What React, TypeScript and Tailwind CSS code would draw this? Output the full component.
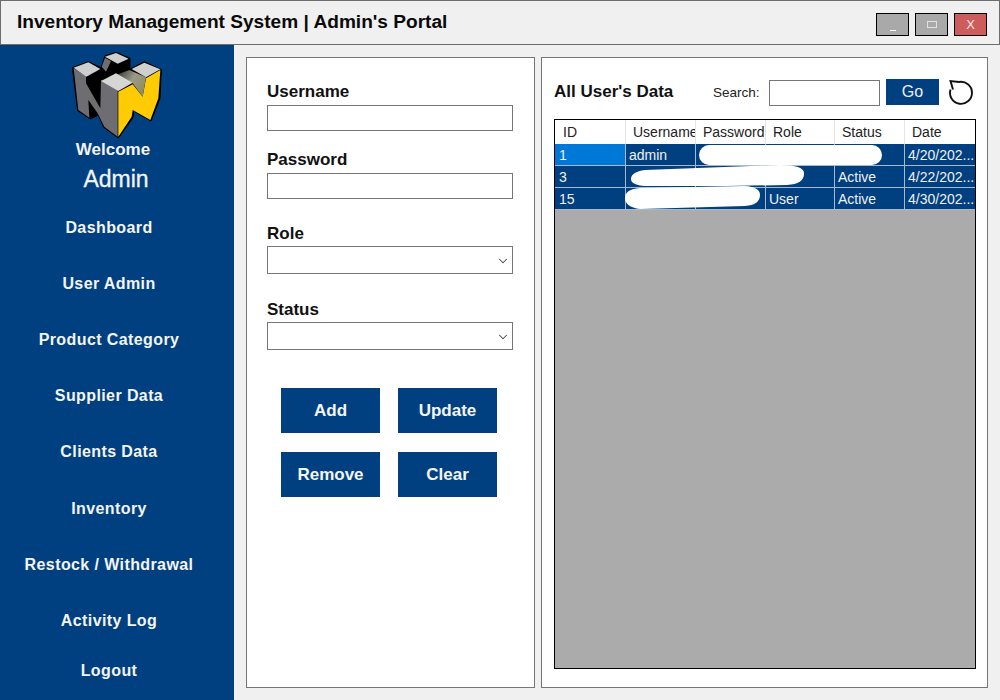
import { ChevronDown } from "lucide-react";

const navItems = [
  { label: "Dashboard", height: "h-[56px]" },
  { label: "User Admin", height: "h-[56px]" },
  { label: "Product Category", height: "h-[56px]" },
  { label: "Supplier Data", height: "h-[56px]" },
  { label: "Clients Data", height: "h-[56px]" },
  { label: "Inventory", height: "h-[57px]" },
  { label: "Restock / Withdrawal", height: "h-[56px]" },
  { label: "Activity Log", height: "h-[56px]" },
  { label: "Logout", height: "h-[44px]" },
];

const rows = [
  { id: "1", username: "admin", role: "", status: "", date: "4/20/202..." },
  { id: "3", username: "", role: "", status: "Active", date: "4/22/202..." },
  { id: "15", username: "", role: "User", status: "Active", date: "4/30/202..." },
];

const N64Logo = () => (
  <svg viewBox="0 0 330 300" className="h-[100px] w-[110px] shrink-0">
    <defs>
      <linearGradient id="olive" x1="0" y1="0" x2="1" y2="0.6">
        <stop offset="0" stopColor="#2a2a2a" />
        <stop offset="0.55" stopColor="#9a9a88" />
        <stop offset="1" stopColor="#8f8f60" />
      </linearGradient>
    </defs>
    <polygon
      points="34,68 82,50 120,68 132,32 165,22 207,40 207,72 250,50 301,74 297,160 270,228 218,198 216,218 172,279 128,247 112,210 88,222 50,197"
      fill="#000"
      stroke="#000"
      strokeWidth="3"
      strokeLinejoin="round"
    />
    <polygon points="38,70 75,93 75,115 118,190 120,105 170,133 170,275 130,245 110,205 82,165 85,218 52,195" fill="#6e6e72" />
    <polygon points="132,38 150,48 135,80 122,65" fill="#6e6e72" />
    <polygon points="172,140 215,118 245,155 255,100 298,75 292,160 268,225 215,195 212,215 172,275" fill="#ffcb05" />
    <polygon points="205,75 255,97 245,155 215,115 165,90" fill="url(#olive)" />
    <polygon points="38,68 82,52 118,72 76,95" fill="#cfcfcf" />
    <polygon points="132,35 165,24 203,41 170,56" fill="#cfcfcf" />
    <polygon points="212,72 250,53 298,73 255,97" fill="#cfcfcf" />
    <polygon points="120,108 165,85 215,113 172,138" fill="#d6d6d6" />
  </svg>
);

const Field = ({ label, className }: { label: string; className: string }) => (
  <label className={`flex w-[246px] flex-col ${className}`}>
    <span className="text-[17px] leading-[20px] font-bold text-[#111]">{label}</span>
    <input className="mt-[3px] h-[26px] w-[246px] border border-[#767676] bg-white" />
  </label>
);

const SelectField = ({ label, className }: { label: string; className: string }) => (
  <label className={`relative flex w-[246px] flex-col ${className}`}>
    <span className="text-[17px] leading-[20px] font-bold text-[#111]">{label}</span>
    <select className="mt-[2px] h-[28px] w-[246px] appearance-none border border-[#767676] bg-white" />
    <ChevronDown size={14} strokeWidth={1.75} className="absolute right-[3px] bottom-[6px] text-[#444]" />
  </label>
);

const ActionButton = ({ label }: { label: string }) => (
  <button className="h-[45px] w-[99px] bg-[#004080] text-[17px] font-bold text-[#f4f4f4]">{label}</button>
);

const App = () => {
  const headerCell = "border-r border-[#e4e4e4] text-left text-[14px] font-normal text-[#222]";
  const dataCell =
    "border-r border-b border-[#a9b9cc] pt-[1px] text-[14px] leading-[20px] font-normal whitespace-nowrap text-[#f0f0f0]";

  return (
    <div className="flex h-[700px] w-[1000px] flex-col overflow-hidden bg-[#f0f0f0] font-['Liberation_Sans',Arial,sans-serif]">
      <header className="flex h-[45px] shrink-0 items-center justify-between border border-[#6d6d6d] bg-[#f0f0f0] pr-[12px] pl-[16px]">
        <h1 className="pb-[1px] text-[19.1px] font-bold text-[#0a0a0a]">Inventory Management System | Admin's Portal</h1>
        <div className="mt-[4px] flex gap-[6px]">
          <button className="flex h-[23px] w-[33px] items-end justify-center border border-black bg-[#a9a9a9] pb-[4px]">
            <span className="h-[1px] w-[6px] bg-white" />
          </button>
          <button className="flex h-[23px] w-[33px] items-center justify-center border border-black bg-[#a9a9a9]">
            <span className="h-[7px] w-[10px] border border-[#e2e2e2]" />
          </button>
          <button className="flex h-[23px] w-[33px] items-center justify-center border border-black bg-[#cd5c5c] text-[13px] text-[#f6e6e6]">
            X
          </button>
        </div>
      </header>

      <div className="flex min-h-0 flex-1">
        <aside className="flex w-[234px] shrink-0 flex-col bg-[#004080] text-[#f4f4f4]">
          <div className="ml-[61px]">
            <N64Logo />
          </div>
          <div className="mt-[-5px] h-[20px] w-[226px] text-center text-[17px] leading-[20px] font-bold">Welcome</div>
          <div className="mt-[6px] h-[34px] w-[232px] text-center text-[23px] leading-[26px] [-webkit-text-stroke:0.3px_#f4f4f4]">
            Admin
          </div>
          <nav className="flex flex-col">
            {navItems.map((item) => (
              <button
                key={item.label}
                className={`${item.height} w-[218px] text-center text-[16px] font-bold tracking-[0.4px]`}
              >
                {item.label}
              </button>
            ))}
          </nav>
        </aside>

        <main className="flex min-w-0 flex-1 gap-[6px] pt-[12px] pl-[12px]">
          <section className="flex h-[631px] w-[289px] flex-col border border-[#767676] bg-white pl-[20px]">
            <Field label="Username" className="mt-[24px]" />
            <Field label="Password" className="mt-[19px]" />
            <SelectField label="Role" className="mt-[25px]" />
            <SelectField label="Status" className="mt-[26px]" />
            <div className="mt-[38px] ml-[14px] grid w-[216px] grid-cols-[99px_99px] gap-x-[18px] gap-y-[19px]">
              <ActionButton label="Add" />
              <ActionButton label="Update" />
              <ActionButton label="Remove" />
              <ActionButton label="Clear" />
            </div>
          </section>

          <section className="flex h-[631px] w-[447px] flex-col border border-[#767676] bg-white pl-[12px]">
            <div className="mt-[21px] flex h-[28px] items-center">
              <h2 className="mb-[2px] w-[159px] text-[17px] font-bold text-[#111]">All User's Data</h2>
              <span className="w-[56px] text-[13.5px] text-[#222]">Search:</span>
              <input className="h-[26px] w-[111px] border border-[#767676] bg-white" />
              <button className="mb-[2px] ml-[6px] h-[26px] w-[53px] bg-[#004080] text-[16px] text-[#f0f0f0]">Go</button>
              <svg viewBox="0 0 28 28" className="ml-[8px] h-[28px] w-[28px] shrink-0" fill="none" stroke="#111" strokeWidth="1.9">
                <path d="M 12 3 A 11 11 0 1 1 3.5 10.5" />
                <path d="M 12 3 L 3.5 2 L 6 10.5" />
              </svg>
            </div>

            <div className="relative mt-[12px] h-[550px] w-[422px] border border-black bg-[#ababab]">
              <table className="w-full table-fixed border-separate border-spacing-0">
                <colgroup>
                  <col className="w-[71px]" />
                  <col className="w-[70px]" />
                  <col className="w-[70px]" />
                  <col className="w-[69px]" />
                  <col className="w-[70px]" />
                  <col />
                </colgroup>
                <thead>
                  <tr className="h-[24px] bg-white">
                    <th className={`${headerCell} pl-[8px]`}>ID</th>
                    <th className={`${headerCell} overflow-hidden pl-[7px] whitespace-nowrap`}>Username</th>
                    <th className={`${headerCell} pl-[7px]`}>Password</th>
                    <th className={`${headerCell} pl-[7px]`}>Role</th>
                    <th className={`${headerCell} pl-[7px]`}>Status</th>
                    <th className={`${headerCell} border-r-0 pl-[7px]`}>Date</th>
                  </tr>
                </thead>
                <tbody>
                  {rows.map((row, index) => (
                    <tr key={row.id} className="h-[22px] bg-[#004080]">
                      <td className={`${dataCell} pl-[4px] ${index === 0 ? "bg-[#0078d7]" : ""}`}>{row.id}</td>
                      <td className={`${dataCell} pl-[3px]`}>{row.username}</td>
                      <td className={`${dataCell} pl-[3px]`} />
                      <td className={`${dataCell} pl-[3px]`}>{row.role}</td>
                      <td className={`${dataCell} pl-[3px]`}>{row.status}</td>
                      <td className={`${dataCell} overflow-hidden border-r-0 pl-[3px]`}>{row.date}</td>
                    </tr>
                  ))}
                </tbody>
              </table>

              {/* redaction scribbles painted over the table */}
              <svg viewBox="0 0 420 100" className="absolute top-0 left-0 h-[100px] w-[420px]" fill="#fff">
                <rect x="144" y="25" width="183" height="20" rx="10" />
                <path d="M 76 59 Q 76 52 90 50 L 225 45 Q 250 45 249 54 Q 249 64 232 65 L 170 66 L 90 66 Q 76 65 76 59 Z" />
                <path d="M 70 78 Q 70 69 85 68 L 190 66 Q 205 67 205 75 Q 205 85 190 86 L 85 89 Q 70 87 70 78 Z" />
              </svg>
            </div>
          </section>
        </main>
      </div>
    </div>
  );
};

export default App;
